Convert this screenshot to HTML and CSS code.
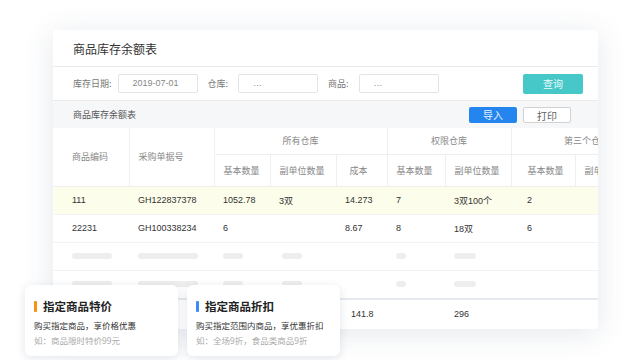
FILE: index.html
```html
<!DOCTYPE html>
<html>
<head>
    <title>商品库存余额表</title>
    <link rel="stylesheet" href="styles.css">
</head>
<body>
    <div class="page">
        <div class="sheet">
            <div class="sheet-title">商品库存余额表</div>

            <div class="filters">
                <span class="label">库存日期:</span>
                <span class="input">2019-07-01</span>
                <span class="label short">仓库:</span>
                <span class="input">…</span>
                <span class="label short">商品:</span>
                <span class="input">…</span>
                <button class="btn-query">查询</button>
            </div>

            <div class="toolbar">
                <span class="toolbar-name">商品库存余额表</span>
                <button class="btn btn-primary">导入</button>
                <button class="btn btn-plain">打印</button>
            </div>

            <table class="grid">
                <colgroup>
                    <col style="width:76px"><col style="width:85px"><col style="width:56px">
                    <col style="width:66px"><col style="width:51px"><col style="width:58px">
                    <col style="width:66px"><col style="width:64px"><col style="width:87px">
                </colgroup>
                <thead>
                    <tr class="head-top">
                        <th rowspan="2" class="first">商品编码</th>
                        <th rowspan="2">采购单据号</th>
                        <th colspan="3" class="group">所有仓库</th>
                        <th colspan="2" class="group">权限仓库</th>
                        <th colspan="2" class="group">第三个仓库</th>
                    </tr>
                    <tr class="head-sub">
                        <th>基本数量</th>
                        <th>副单位数量</th>
                        <th class="center">成本</th>
                        <th>基本数量</th>
                        <th>副单位数量</th>
                        <th class="wide">基本数量</th>
                        <th>副单位数量</th>
                    </tr>
                </thead>
                <tbody>
                    <tr class="active">
                        <td class="first">111</td>
                        <td>GH122837378</td>
                        <td>1052.78</td>
                        <td>3双</td>
                        <td>14.273</td>
                        <td>7</td>
                        <td>3双100个</td>
                        <td class="wide">2</td>
                        <td></td>
                    </tr>
                    <tr>
                        <td class="first">22231</td>
                        <td>GH100338234</td>
                        <td>6</td>
                        <td></td>
                        <td>8.67</td>
                        <td>8</td>
                        <td>18双</td>
                        <td class="wide">6</td>
                        <td></td>
                    </tr>
                    <tr class="skeleton">
                        <td class="first"><i style="width:40px"></i></td>
                        <td><i style="width:60px"></i></td>
                        <td><i style="width:20px"></i></td>
                        <td><i style="width:20px"></i></td>
                        <td></td>
                        <td><i style="width:10px"></i></td>
                        <td><i style="width:22px"></i></td>
                        <td></td>
                        <td></td>
                    </tr>
                    <tr class="skeleton">
                        <td class="first"><i style="width:40px"></i></td>
                        <td><i style="width:60px"></i></td>
                        <td><i style="width:20px"></i></td>
                        <td><i style="width:20px"></i></td>
                        <td></td>
                        <td><i style="width:10px"></i></td>
                        <td><i style="width:22px"></i></td>
                        <td></td>
                        <td></td>
                    </tr>
                </tbody>
                <tfoot>
                    <tr>
                        <td class="first"></td>
                        <td></td>
                        <td></td>
                        <td></td>
                        <td class="sum">141.8</td>
                        <td></td>
                        <td>296</td>
                        <td></td>
                        <td></td>
                    </tr>
                </tfoot>
            </table>
        </div>

        <div class="promos">
            <div class="promo">
                <div class="promo-title"><span class="bar orange"></span>指定商品特价</div>
                <div class="promo-desc">购买指定商品，享价格优惠</div>
                <div class="promo-eg">如：商品限时特价99元</div>
            </div>
            <div class="promo">
                <div class="promo-title"><span class="bar blue"></span>指定商品折扣</div>
                <div class="promo-desc">购买指定范围内商品，享优惠折扣</div>
                <div class="promo-eg">如：全场9折，食品类商品9折</div>
            </div>
        </div>
    </div>
</body>
</html>
```

FILE: styles.css
```css
body { margin: 0; background: #fff; font-family: "Liberation Sans", "Noto Sans CJK SC", sans-serif; color: #333; }
.page { position: relative; width: 640px; height: 360px; overflow: hidden; padding: 30px 0 0 53px; box-sizing: border-box; }

.sheet { width: 545px; height: 299px; background: #fff; border-radius: 4px; overflow: hidden;
  box-shadow: 0 4px 30px rgba(50, 70, 110, 0.13); }
.sheet-title { height: 36px; display: flex; align-items: center; padding-left: 20px; font-size: 12px; color: #333;
  border-bottom: 1px solid #ebebeb; font-family: "Noto Sans CJK SC", sans-serif; }

.filters { height: 33px; display: flex; align-items: center; padding: 0 15px 0 20px; border-bottom: 1px solid #ebebeb; }
.label { font-size: 9px; color: #777; margin-right: 6px; font-family: "Noto Sans CJK SC", sans-serif; }
.label.short { margin-right: 10px; }
.input { width: 64px; height: 17px; border: 1px solid #e4e4e4; border-radius: 2px; margin-right: 10px;
  font-size: 9px; color: #888; line-height: 17px; padding-left: 14px; }
.btn-query { margin-left: auto; width: 60px; height: 20px; border: 0; border-radius: 2px; background: #47c8c8;
  color: #eafafa; font-size: 10px; font-family: "Noto Sans CJK SC", sans-serif; padding: 0; }

.toolbar { height: 27px; background: #f6f7f9; display: flex; align-items: center; padding: 0 27px 0 20px; }
.toolbar-name { font-size: 9px; color: #555; margin-right: auto; font-family: "Noto Sans CJK SC", sans-serif; }
.btn { width: 48px; height: 16px; padding: 0; font-size: 10px; border-radius: 2px; font-family: "Noto Sans CJK SC", sans-serif; }
.btn-primary { background: #2585ee; border: 0; color: #e8f2ff; margin-right: 6px; }
.btn-plain { background: #fff; border: 1px solid #d2d2d2; color: #666; }

.grid { border-collapse: collapse; table-layout: fixed; width: 609px; font-size: 9px; }
.grid th { font-weight: normal; color: #888; text-align: left; padding: 0 0 0 9px; border: 1px solid #efefef;
  border-top: 0; font-family: "Noto Sans CJK SC", sans-serif; }
.grid th.first, .grid td.first { padding-left: 19px; border-left: 0; }
.grid th.group { text-align: center; padding: 0; }
.grid th.center { padding-left: 13px; }
.grid .wide { padding-left: 16px; }
.head-top { height: 26px; }
.head-sub { height: 32px; }
.grid td { height: 27px; padding: 0 0 0 9px; border-bottom: 1px solid #f3f3f3; color: #333; white-space: nowrap; }
.grid tr.active td { background: #fcfdea; }
.skeleton i { display: block; height: 6px; border-radius: 3px; background: #eeeeee; }
.skeleton td:nth-child(4) { padding-left: 12px; }
.grid tfoot td { border-top: 2px solid #e6eaf0; border-bottom: 0; height: 28px; }
.grid tfoot td.sum { padding-left: 15px; }

.promos { position: absolute; left: 25px; top: 285px; display: flex; gap: 9px; }
.promo { width: 153px; height: 71px; box-sizing: border-box; background: #fff; border-radius: 6px; padding: 14px 0 0 9px;
  box-shadow: 0 2px 10px rgba(50, 70, 110, 0.14); font-family: "Noto Sans CJK SC", sans-serif; }
.promo-title { display: flex; align-items: center; height: 14px; font-size: 11.5px; font-weight: 600; color: #222; }
.bar { width: 3px; height: 11px; border-radius: 1px; margin-right: 6px; }
.bar.orange { background: #f7930f; }
.bar.blue { background: #3b8cf5; }
.promo-desc { margin-top: 6px; font-size: 8.5px; line-height: 12px; color: #333; white-space: nowrap; }
.promo-eg { margin-top: 3px; font-size: 8.5px; line-height: 12px; color: #aaa; white-space: nowrap; }
```
